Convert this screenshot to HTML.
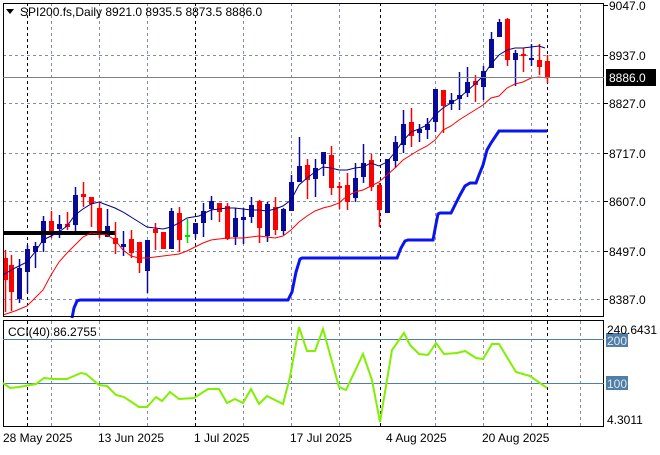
<!DOCTYPE html>
<html><head><meta charset="utf-8">
<style>
html,body{margin:0;padding:0;background:#fff;}
body{width:660px;height:450px;overflow:hidden;font-family:"Liberation Sans",sans-serif;}
svg text{font-family:"Liberation Sans",sans-serif;font-size:12px;fill:#000;}
</style></head><body>
<svg id="s" width="660" height="450" xmlns="http://www.w3.org/2000/svg">
<rect width="660" height="450" fill="#fff"/>
<g id="grid"></g>
<g id="cand"></g>
<!-- black thick line -->
<line x1="3" y1="233" x2="115" y2="233" stroke="#000" stroke-width="4"/>
<!-- blue step -->
<polyline fill="none" stroke="#0a14f0" stroke-width="3" points="72,318 74,308 77,301 80,300 288,300 292,292 296,272 300,259 302,258 397,258 401,248 405,241 408,240 433,240 436,224 438,214 440,213 451,213 455,205 460,195 465,186 470,183 476,183 479,175 483,165 487,150 491,143 499,131 547,131"/>
<!-- navy MA -->
<polyline fill="none" stroke="#00008b" stroke-width="1" points="3,275 15,268 27,262 35,252 43,240 51,236 59,232 67,226 75,215 83,209 91,204 99,202 107,205 115,208 123,212 131,217 139,222 147,227 155,228 163,229 171,227 179,223 187,218 199,216 211,210 219,209 227,208 235,208 243,209 251,210 259,210 267,211 275,209 283,206 291,200 299,185 307,178 315,172 323,167 331,168 339,170 347,170 355,168 363,167 371,163 379,166 387,162 395,152 403,141 411,132 419,129 427,125 435,115 443,108 451,103 459,98 467,91 475,84 483,76 491,64 499,55 507,50 515,48 523,48 531,47 539,46 545,48"/>
<!-- red MA -->
<polyline fill="none" stroke="#ff0000" stroke-width="1" points="3,315 15,311 27,306 35,298 43,290 51,275 59,262 67,253 75,245 83,237 91,233 99,234 107,235 115,240 123,250 131,256 139,258 147,258 155,257 163,256 171,255 179,254 187,251 195,247 203,243 211,240 219,239 227,238 235,238 243,238 251,237 259,236 267,237 275,238 283,236 291,230 299,222 307,216 315,211 323,208 331,206 339,203 347,196 355,192 363,190 371,186 379,182 387,175 395,168 403,160 411,155 419,150 427,146 435,140 443,130 451,126 459,120 467,115 475,110 483,105 491,98 499,96 507,88 515,84 523,82 531,78 539,77 547,78"/>
<!-- frames -->
<rect x="3.5" y="3.5" width="600" height="313" fill="none" stroke="#000"/>
<rect x="3.5" y="320.5" width="600" height="106" fill="none" stroke="#000"/>
<!-- current price line -->
<line x1="3" y1="77.5" x2="604" y2="77.5" stroke="#808080"/>
<!-- CCI levels -->
<line x1="3" y1="339.5" x2="604" y2="339.5" stroke="#4f7fa8"/>
<line x1="3" y1="383.5" x2="604" y2="383.5" stroke="#4f7fa8"/>
<polyline fill="none" stroke="#80f000" stroke-width="2" points="3,383 10,388 19,387 36,384 44,378 53,379 67,379 81,373 86,374 99,385 107,386 116,395 124,397 139,407 147,407 156,397 162,401 170,392 179,399 194,398 208,389 219,389 227,403 235,399 243,403 251,389 259,404 267,396 283,404 290,377 299,327 307,351 315,351 323,329 339,387 346,390 363,354 372,380 380,422 392,350 404,333 410,345 419,354 428,355 436,343 444,354 457,353 465,351 476,358 483,359 492,344 499,344 516,372 530,376 547,388"/>
<!-- title -->
<path d="M6,9 L14,9 L10,14 Z" fill="#000"/>
<text x="20" y="16">SPI200.fs,Daily  8921.0 8935.5 8873.5 8886.0</text>
<text x="8" y="336">CCI(40) 86.2755</text>
<!-- right axis -->
<g id="ax"></g>
<rect x="606" y="69" width="50" height="17" fill="#000"/>
<text x="609" y="82" style="fill:#fff">8886.0</text>
<rect x="606" y="333" width="22" height="14" fill="#4f7fa8"/>
<rect x="606" y="376" width="22" height="14" fill="#4f7fa8"/>
<text x="607" y="334">240.6431</text>
<text x="607" y="345" style="fill:#dfe8f0">200</text>
<text x="607" y="388" style="fill:#dfe8f0">100</text>
<text x="607" y="424">4.3011</text>
<text x="3" y="442">28 May 2025</text>
<text x="98" y="442">13 Jun 2025</text>
<text x="194" y="442">1 Jul 2025</text>
<text x="290" y="442">17 Jul 2025</text>
<text x="386" y="442">4 Aug 2025</text>
<text x="482" y="442">20 Aug 2025</text>
</svg>
<script>
var NS="http://www.w3.org/2000/svg";
function el(p,t,a){var e=document.createElementNS(NS,t);for(var k in a)e.setAttribute(k,a[k]);p.appendChild(e);return e;}
var g=document.getElementById('grid');
var hy=[5,55,103,153,201,251,299];
hy.forEach(function(y){if(y>5)el(g,'line',{x1:3,x2:604,y1:y+.5,y2:y+.5,stroke:'#8090a0','stroke-dasharray':'3,3'});});
var gx=[51,99,147,243,291,339,435,483,531,580];
gx.forEach(function(x){[[3,317],[321,426]].forEach(function(r){el(g,'line',{x1:x+.5,x2:x+.5,y1:r[0],y2:r[1],stroke:'#8090a0','stroke-dasharray':'3,3'});});});
[27,195,380,547].forEach(function(x){[[3,317],[321,426]].forEach(function(r){el(g,'line',{x1:x+.5,x2:x+.5,y1:r[0],y2:r[1],stroke:'#000','stroke-dasharray':'3,3'});});});
var ax=document.getElementById('ax');
var lab=[[5,'9047.0'],[55,'8937.0'],[103,'8827.0'],[153,'8717.0'],[201,'8607.0'],[251,'8497.0'],[299,'8387.0']];
lab.forEach(function(l){el(ax,'line',{x1:604,x2:608,y1:l[0]+.5,y2:l[0]+.5,stroke:'#000'});var t=el(ax,'text',{x:609,y:l[0]+5});t.textContent=l[1];});
var B='#0a0a9a',R='#ff0000',G='#00dd00';
var c=[[5,R,258,280,250,312],[11,R,265,292,255,311],[19,B,268,299,259,303],[27,B,249,272,245,293],[35,B,246,252,242,268],[43,B,221,243,216,252],[51,R,221,233,211,238],[59,B,224,229,215,238],[67,R,224,227,212,230],[75,B,195,225,187,232],[83,R,194,197,182,207],[91,R,197,204,197,227],[99,R,208,231,203,238],[107,B,226,237,209,237],[115,R,238,244,222,254],[123,B,244,247,231,256],[131,R,239,253,230,258],[139,R,242,263,242,273],[147,B,240,271,240,293],[155,R,229,233,223,250],[163,R,232,249,232,249],[171,B,211,249,208,249],[179,R,213,240,207,252],[187,G,235,236,219,243],[195,B,223,234,223,238],
[203,B,211,223,203,237],[211,B,201,209,196,220],[219,R,203,212,203,222],[227,R,206,239,203,240],[235,B,218,237,208,245],[243,B,217,220,208,244],[251,B,205,217,197,223],[259,R,201,228,200,243],[267,B,204,236,202,242],[275,R,207,230,197,235],[283,B,209,231,208,235],[291,B,182,211,175,211],[299,B,166,182,137,182],[307,R,165,180,159,199],[315,B,168,179,159,197],[323,B,152,164,152,176],[331,R,155,188,146,195],[339,R,186,187,182,209],[347,R,185,202,173,210],[355,B,178,198,163,202],[363,B,163,177,144,183],[371,R,160,187,154,191],[379,R,185,210,183,227],[387,B,159,213,159,213],[395,B,142,161,136,168],[403,B,124,145,110,153],[411,R,122,136,108,147],[419,B,129,133,124,142],[427,B,124,130,118,139],[435,B,89,122,89,132],[443,R,90,106,90,133],[451,B,100,104,93,110],[459,B,95,99,72,110],[467,B,82,93,67,97],[475,R,81,85,75,102],[483,B,71,87,66,100],[491,B,39,68,32,68],[499,B,22,37,19,37],[507,R,19,60,18,66],[515,B,53,60,50,86],[523,R,54,55,48,72],[531,B,58,60,44,66],[539,R,60,67,44,75],[547,R,61,78,55,83]];
var cg=document.getElementById('cand');
c.forEach(function(k){el(cg,'line',{x1:k[0]+.5,x2:k[0]+.5,y1:k[4],y2:k[5],stroke:k[1],'stroke-width':1.5});
var h=Math.max(k[3]-k[2],2);var x0=Math.max(k[0]-2,4);el(cg,'rect',{x:x0,y:k[2],width:k[0]+3-x0,height:h,fill:k[1]});});
</script>
</body></html>
